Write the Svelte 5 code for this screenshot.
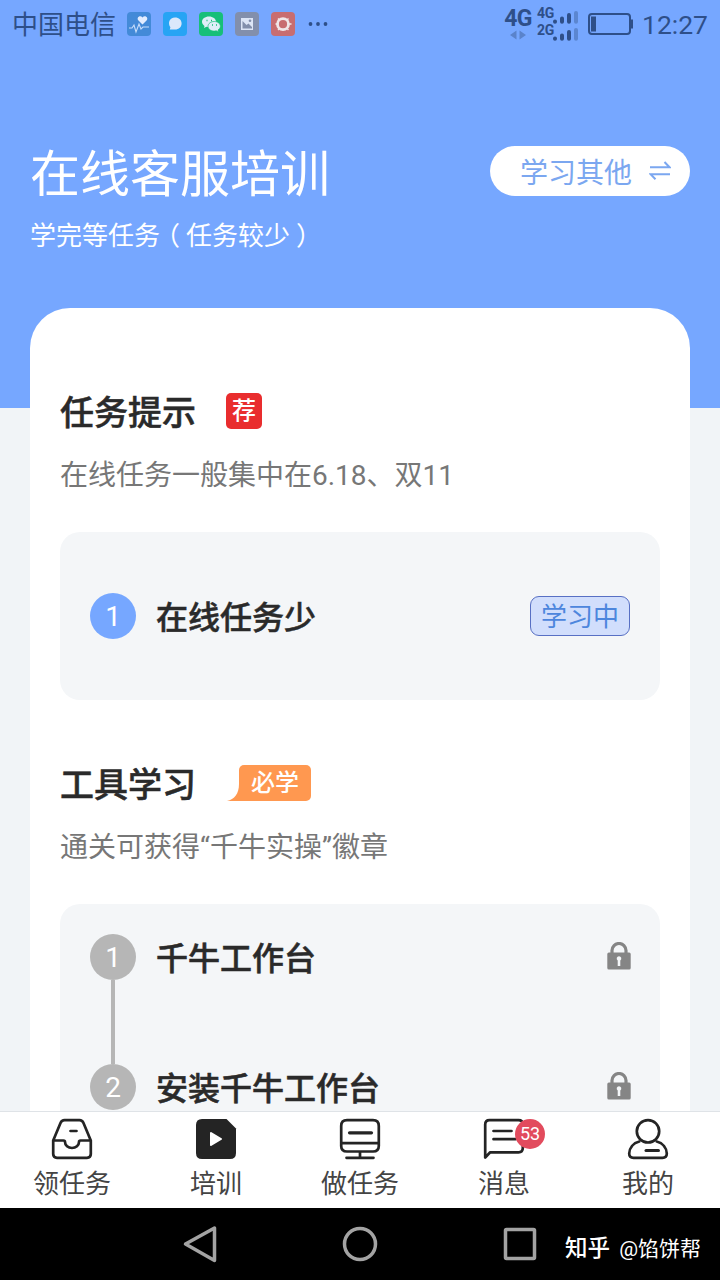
<script lang="ts">
  type Step = { title: string; state: 'learning' | 'locked' };

  const hintSteps: Step[] = [{ title: '在线任务少', state: 'learning' }];
  const toolSteps: Step[] = [
    { title: '千牛工作台', state: 'locked' },
    { title: '安装千牛工作台', state: 'locked' }
  ];

  const tabs = [
    { id: 'tasks', label: '领任务', badge: 0 },
    { id: 'training', label: '培训', badge: 0 },
    { id: 'work', label: '做任务', badge: 0 },
    { id: 'messages', label: '消息', badge: 53 },
    { id: 'me', label: '我的', badge: 0 }
  ];

  let active = $state('training');
</script>

{#snippet steps(items: Step[])}
  {#each items as item, index}
    <li class={item.state}>
      <span class="number">{index + 1}</span>
      <strong>{item.title}</strong>
      {#if item.state === 'learning'}
        <span class="status-tag">学习中</span>
      {:else}
        <svg class="lock" width="24" height="28" viewBox="0 0 24 28" aria-label="locked">
          <path d="M5 12V8.500a7 7 0 0 1 14 0V12" fill="none" stroke="#858585" stroke-width="3.200" />
          <rect x="0.300" y="10.500" width="23.400" height="17" rx="1.500" fill="#858585" />
          <path d="M12 14.200a2.300 2.300 0 0 1 1.300 4.200V24h-2.600v-5.600A2.300 2.300 0 0 1 12 14.200z" fill="#f4f6f8" />
        </svg>
      {/if}
    </li>
  {/each}
{/snippet}

<div class="phone">
  <main>
    <div class="status-bar">
      <span class="carrier">中国电信</span>
      <div class="apps">
        <svg viewBox="0 0 24 24">
          <rect width="24" height="24" rx="4" fill="#438ad8" />
          <path d="M15.500 12.500 11 8c-1.500-3 2.500-5.200 4.500-2.600 2-2.600 6-.4 4.500 2.600z" fill="#e3edff" />
          <path d="M2 16h3l2-3 2 7 3-8 2 5 2-2h6" fill="none" stroke="#c5dcfb" stroke-width="1.100" />
        </svg>
        <svg viewBox="0 0 24 24">
          <rect width="24" height="24" rx="4" fill="#27a4f4" />
          <path d="M12 5.500c4 0 6.600 2.600 6.600 6s-2.600 6-6.600 6H6.800l.6-2.200C4.400 11 6.500 5.500 12 5.500z" fill="#dbe8fb" />
        </svg>
        <svg viewBox="0 0 24 24">
          <rect width="24" height="24" rx="4" fill="#17bf79" />
          <path d="M10 4.500c-4 0-7 2.300-7 5.300 0 1.700 1 3.200 2.500 4.100L5 16l2.400-1.200 2.600.4c3.900 0 7-2.400 7-5.400s-3.100-5.300-7-5.300z" fill="#e0eef8" />
          <path d="M15.300 9.500c-3.500 0-6.300 2.100-6.300 4.800s2.800 4.800 6.300 4.800l2-.3 2.200 1.200-.5-2c1.500-.9 2.400-2.200 2.400-3.700 0-2.700-2.700-4.800-6.100-4.800z" fill="#e0eef8" stroke="#17bf79" stroke-width=".7" />
          <path d="M7.500 8.500h1M12 8.500h1M13 13h1M17 13h1" stroke="#17bf79" stroke-width="1.300" />
        </svg>
        <svg viewBox="0 0 24 24">
          <rect width="24" height="24" rx="4" fill="#828fac" />
          <path d="M6 6h12v12H6z" fill="#dce5f6" />
          <path d="m7.500 9 4 4 2-1.500 3.500 3.500v1.500H7.500z" fill="#828fac" />
          <circle cx="15" cy="8.800" r="1.300" fill="#828fac" />
        </svg>
        <svg viewBox="0 0 24 24">
          <rect width="24" height="24" rx="4" fill="#c86d70" />
          <circle cx="12" cy="12.200" r="5.500" fill="none" stroke="#f0e7e8" stroke-width="2.800" />
          <path d="M4.500 12h2M17.500 12h3M7 6.500l2 2M15.500 8.500l2-2M7 18l2-2M15.500 16l2 2" stroke="#f0e7e8" stroke-width="1.400" />
        </svg>
      </div>
      <svg class="more" width="20" height="4" viewBox="0 0 20 4">
        <circle cx="2.500" cy="2" r="1.900" /><circle cx="10" cy="2" r="1.900" /><circle cx="17.500" cy="2" r="1.900" />
      </svg>

      <div class="signals">
        <div class="network">
          <b>4G</b>
          <svg width="16" height="10" viewBox="0 0 16 10"><path d="M0 5 6.500.5v9zM16 5 9.500.5v9z" fill="#5a83cb" /></svg>
        </div>
        <div class="sims">
          {#each ['4G', '2G'] as sim}
            <div>
              <b>{sim}</b>
              <svg width="25" height="13" viewBox="0 0 25 13">
                <g stroke-width="4" stroke-linecap="round" stroke="#2e4f89">
                  <path d="M2 10.500v.3M9 7.500v3.300M16 4v6.800" />
                  <path d="M23 2v8.800" stroke="#5b86d0" />
                </g>
              </svg>
            </div>
          {/each}
        </div>
        <svg width="45" height="22" viewBox="0 0 45 22">
          <rect x="1" y="1" width="41" height="20" rx="3" fill="none" stroke="#2e4f89" stroke-width="2" />
          <path d="M3 3.500h5v15H3zM42 6.500h3v9h-3z" fill="#2e4f89" />
        </svg>
        <span class="clock">12:27</span>
      </div>
    </div>

    <header>
      <div>
        <h1>在线客服培训</h1>
        <p>学完等任务<span class="open">（</span>任务较少<span class="close">）</span></p>
      </div>
      <button class="switch">
        学习其他
        <svg width="22" height="22" viewBox="0 0 22 22" fill="none" stroke="#7ba7f0" stroke-width="2">
          <path d="M1 7.200h19.500L15.500 2M21 14.200H1.500l5 5" />
        </svg>
      </button>
    </header>

    <div class="card">
      <section>
        <div class="heading">
          <h2>任务提示</h2>
          <span class="recommend">荐</span>
        </div>
        <p>在线任务一般集中在6.18、双11</p>
        <ol class="single">{@render steps(hintSteps)}</ol>
      </section>

      <section>
        <div class="heading">
          <h2>工具学习</h2>
          <span class="required">
            <svg width="12" height="36" viewBox="0 0 12 36"><path d="M12 0v36H0c7.500-1.800 12-7 12-17z" fill="#ff9850" /></svg>
            <span>必学</span>
          </span>
        </div>
        <p>通关可获得“千牛实操”徽章</p>
        <ol>{@render steps(toolSteps)}</ol>
      </section>
    </div>
  </main>

  <nav>
    {#each tabs as tab}
      <button class:active={active === tab.id} onclick={() => (active = tab.id)}>
        <span class="icon">
          <svg width="42" height="42" viewBox="0 0 42 42" fill="none" stroke="#242424" stroke-width="2.700" stroke-linecap="round" stroke-linejoin="round">
            {#if tab.id === 'tasks'}
              <path d="M2.200 22.500 9.500 5q1.200-2.800 4-2.800h15q2.800 0 4 2.800l7.300 17.500V36q0 3.800-3.800 3.800H6Q2.200 39.800 2.200 36zM2.200 22.500h10.300q1.500 0 1.500 1.500a7 6 0 0 0 14 0q0-1.500 1.500-1.500h10.300M19.500 13h6" />
            {:else if tab.id === 'training'}
              <path d="M7 1h24.500L41 10.500V35q0 6-6 6H7q-6 0-6-6V7q0-6 6-6z" fill="#242424" stroke="none" />
              <path d="m16 15 10 6-10 6z" fill="#fff" stroke="#fff" stroke-width="2" />
            {:else if tab.id === 'work'}
              <path d="M8 2.200h26q5.800 0 5.800 5.800v20q0 5.500-5.800 5.500H8q-5.800 0-5.800-5.500V8Q2.200 2.200 8 2.200zM2.200 25.200h37.600M21 33.500v6M7.500 39.800h27" />
              <path d="M10.500 14.800h22" stroke-width="3.200" />
            {:else if tab.id === 'messages'}
              <path d="M2.200 39.500V6.500q0-4.300 4.300-4.300h29q4.300 0 4.300 4.300V30q0 4.300-4.300 4.300H7.200zM10.500 13h18M10.500 21.200h22" />
            {:else}
              <circle cx="21" cy="13.300" r="11.200" />
              <path d="M12.300 23.500C6 25 2.500 30 2.200 35.500q0 4.300 4.300 4.300h29q4.300 0 4.300-4.300c-.3-5.500-3.800-10.500-10.100-12" />
              <path d="M19 32.500h12.500" stroke-width="3" />
            {/if}
          </svg>
          {#if tab.badge}<em>{tab.badge}</em>{/if}
        </span>
        {tab.label}
      </button>
    {/each}
  </nav>

  <footer>
    <svg width="34" height="38" viewBox="0 0 34 38"><path d="M31.500 3v32.500L2.500 19z" /></svg>
    <svg width="38" height="38" viewBox="0 0 38 38"><circle cx="19" cy="19" r="15.500" /></svg>
    <svg width="34" height="34" viewBox="0 0 34 34"><rect x="2.500" y="2.500" width="29" height="29" rx="1" /></svg>
    <span class="watermark"><b>知乎</b> @馅饼帮</span>
  </footer>
</div>

<style>
  :global(body) { margin: 0; }
  .phone { display: flex; flex-direction: column; width: 720px; height: 1280px; overflow: hidden; background: #f1f4f7; color: #2a2a2a; font-family: Roboto, "Noto Sans CJK SC", sans-serif; }
  main { flex: 1; min-height: 0; overflow: hidden; }
  h1, h2, p, ol { margin: 0; padding: 0; }
  button { padding: 0; border: 0; background: none; font: inherit; color: inherit; cursor: pointer; }
  svg { display: block; flex: none; }

  .status-bar { display: flex; align-items: center; height: 48px; padding: 0 12px 0 12px; box-sizing: border-box; background: #76a7ff; color: #2e4f89; }
  .carrier { width: 104px; padding-top: 2px; font-size: 26px; line-height: 46px; }
  .apps { display: flex; gap: 12px; margin-left: 11px; }
  .apps svg { width: 24px; height: 24px; }
  .more { margin-left: 13px; fill: #2e4f89; }
  .signals { display: flex; align-items: center; margin-left: auto; }
  .network { display: grid; justify-items: center; width: 28px; margin: 0 5px 1px 0; }
  .network b { font-size: 23px; line-height: 22px; letter-spacing: -.8px; }
  .sims { display: grid; gap: 1px; margin: 0 10px 2px 0; }
  .sims div { display: flex; align-items: end; height: 16px; }
  .sims b { width: 16px; font-size: 14px; line-height: 19px; letter-spacing: -.3px; }
  .sims svg { margin-bottom: -1px; }
  .clock { margin-left: 9px; padding-top: 2px; font-size: 26.500px; line-height: 46px; }

  header { display: flex; justify-content: space-between; align-items: flex-start; height: 360px; padding: 98px 30px 0; box-sizing: border-box; background: #76a7ff; color: #fff; }
  h1 { padding-top: 2px; font-size: 50px; font-weight: 400; line-height: 54px; }
  header p { margin-top: 15px; font-size: 26px; line-height: 38px; }
  .open { margin: 0 6px 0 -6px; }
  .close { margin-left: 6px; }
  .switch { display: flex; align-items: center; gap: 17px; width: 200px; height: 50px; padding: 0 0 0 30px; border-radius: 25px; background: #fff; color: #7ba7f0; font-size: 28px; }

  .card { position: relative; margin: -100px 30px 0; padding: 73px 30px 60px; border-radius: 40px; background: #fff; }
  section + section { margin-top: 53px; }
  .heading { display: flex; align-items: center; height: 60px; }
  h2 { padding-bottom: 2px; font-size: 34px; font-weight: 500; -webkit-text-stroke: .5px; }
  .recommend { width: 36px; margin-left: 30px; border-radius: 5px; background: #e92d2e; color: #fff; font-size: 24px; font-weight: 500; line-height: 36px; text-align: center; }
  .required { display: flex; margin-left: 31px; color: #fff; font-size: 24px; font-weight: 500; line-height: 36px; }
  .required > span { width: 72px; border-radius: 5px 5px 5px 0; background: #ff9850; text-align: center; }
  section p { margin-top: 15px; color: #777; font-size: 28px; line-height: 40px; }
  ol { margin-top: 36px; padding: 0 30px; border-radius: 20px; background: #f4f6f8; list-style: none; }
  ol.single { padding: 31px 30px; }
  li { display: flex; align-items: center; position: relative; height: 106px; }
  li + li { margin-top: 24px; }
  li + li::before { content: ''; position: absolute; left: 21px; top: -54px; width: 4px; height: 84px; background: #b6b6b6; }
  .number { width: 46px; height: 45px; padding-top: 1px; border-radius: 50%; background: #b6b6b6; color: #fff; font-size: 28px; line-height: 46px; text-align: center; }
  .learning .number { background: #76a7ff; }
  li strong { margin-left: 20px; padding-bottom: 3px; font-size: 32px; font-weight: 500; -webkit-text-stroke: .5px; }
  .status-tag { width: 98px; height: 37px; margin-left: auto; padding-top: 1px; border: 1px solid #5870c4; border-radius: 9px; background: #d1defc; color: #4d86dd; font-size: 26px; line-height: 38px; text-align: center; }
  .lock { margin: 0 -1px 2px auto; }

  nav { display: grid; grid-template-columns: repeat(5, 1fr); height: 97px; box-sizing: border-box; border-top: 1px solid #dfe3e7; background: #fff; }
  nav button { display: flex; flex-direction: column; align-items: center; gap: 2px; padding-top: 6px; color: #444; font-size: 26px; line-height: 44px; }
  .icon { position: relative; }
  em { position: absolute; left: 32px; top: 1px; width: 30px; border-radius: 50%; background: #e24b5d; color: #fff; font-size: 18px; font-style: normal; line-height: 30px; text-align: center; }

  footer { display: flex; align-items: center; height: 72px; padding: 0 19px 0 183px; box-sizing: border-box; background: #000; fill: none; stroke: #a3a3a3; stroke-width: 3.500; stroke-linejoin: round; }
  footer svg + svg { margin-left: 124px; }
  .watermark { margin-left: auto; padding-top: 4px; color: #fff; font-size: 21px; white-space: nowrap; }
  .watermark b { margin-right: 4px; font-size: 22.500px; font-weight: 500; }
</style>
